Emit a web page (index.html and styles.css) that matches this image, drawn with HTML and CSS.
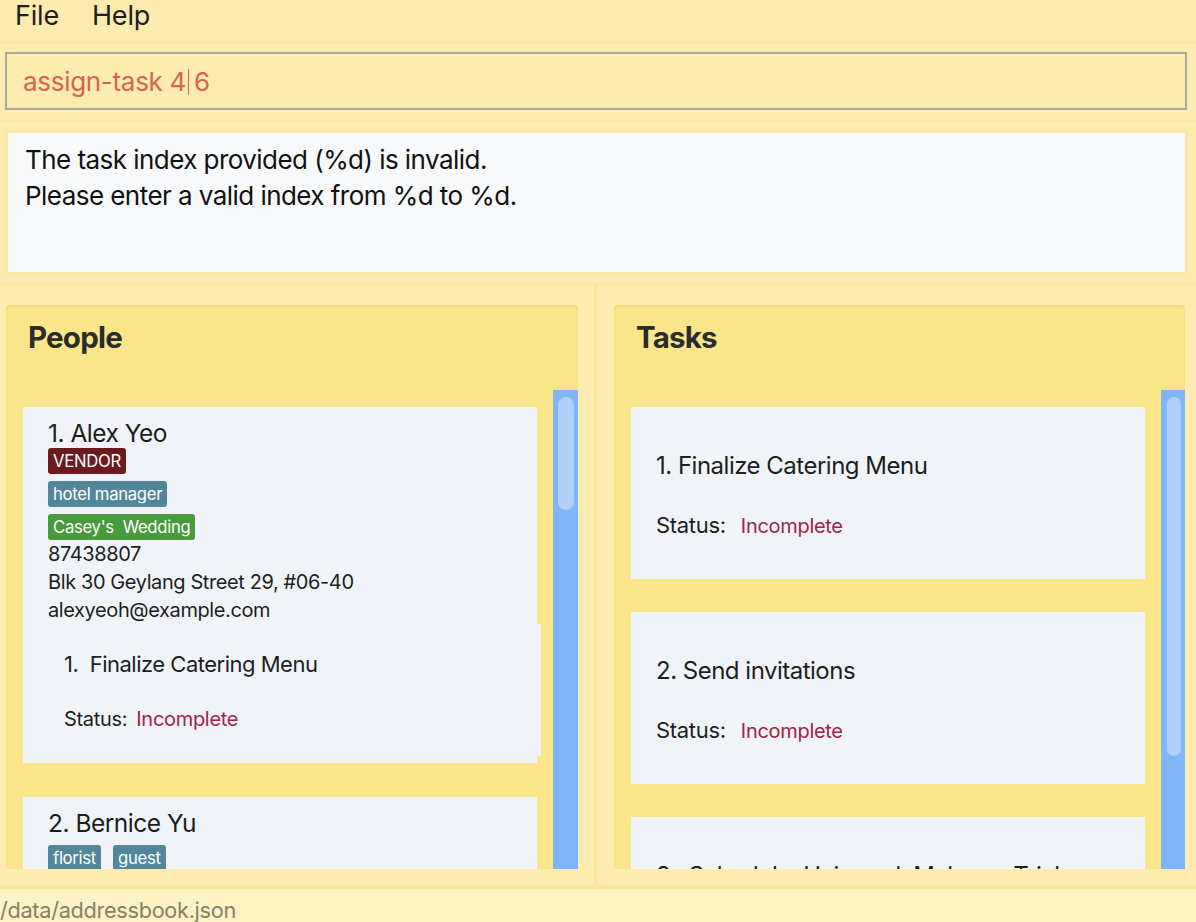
FILE: index.html
```html
<!DOCTYPE html>
<html lang="en">
<head>
<meta charset="utf-8">
<title>Address Book</title>
<link rel="stylesheet" href="styles.css">
</head>
<body>
<div class="app">
  <nav class="menubar">
    <span class="menu-item">File</span>
    <span class="menu-item">Help</span>
  </nav>

  <div class="command-area">
    <div class="command-box">
      <span class="command-text">assign-task 4<span class="caret"></span> 6</span>
    </div>
  </div>

  <div class="result-area">
    <div class="result-box">
      <p class="result-line">The task index provided (%d) is invalid.</p>
      <p class="result-line">Please enter a valid index from %d to %d.</p>
    </div>
  </div>

  <div class="panes">
    <div class="pane pane-left">
      <section class="panel">
        <header class="panel-header"><h2 class="panel-title">People</h2></header>
        <div class="panel-body">
          <div class="list">
            <article class="card person-card">
              <div class="person-name">1. Alex Yeo</div>
              <div class="tag-row"><span class="tag tag-vendor">VENDOR</span></div>
              <div class="tag-row"><span class="tag tag-blue">hotel manager</span></div>
              <div class="tag-row tag-row-last"><span class="tag tag-green">Casey's&nbsp; Wedding</span></div>
              <div class="person-line">87438807</div>
              <div class="person-line">Blk 30 Geylang Street 29, #06-40</div>
              <div class="person-line">alexyeoh@example.com</div>
              <div class="inner-task">
                <div class="inner-task-title">1.&nbsp; Finalize Catering Menu</div>
                <div class="status-line"><span class="status-label">Status:</span><span class="status-value">Incomplete</span></div>
              </div>
            </article>
            <article class="card person-card">
              <div class="person-name">2. Bernice Yu</div>
              <div class="tag-row"></div>
              <div class="tag-row tag-row-last"><span class="tag tag-blue">florist</span><span class="tag tag-blue">guest</span></div>
            </article>
          </div>
          <div class="scrollbar"><div class="thumb thumb-left"></div></div>
        </div>
      </section>
    </div>

    <div class="divider"></div>

    <div class="pane pane-right">
      <section class="panel">
        <header class="panel-header"><h2 class="panel-title">Tasks</h2></header>
        <div class="panel-body">
          <div class="list task-list">
            <article class="card task-card">
              <div class="task-title">1. Finalize Catering Menu</div>
              <div class="status-line"><span class="status-label">Status:</span><span class="status-value">Incomplete</span></div>
            </article>
            <article class="card task-card">
              <div class="task-title">2. Send invitations</div>
              <div class="status-line"><span class="status-label">Status:</span><span class="status-value">Incomplete</span></div>
            </article>
            <article class="card task-card">
              <div class="task-title">3.&nbsp; Schedule&nbsp; Hair&nbsp; and&nbsp; Makeup&nbsp; Trial</div>
            </article>
          </div>
          <div class="scrollbar"><div class="thumb thumb-right"></div></div>
        </div>
      </section>
    </div>
  </div>

  <footer class="statusbar">/data/addressbook.json</footer>
</div>
</body>
</html>
```

FILE: styles.css
```css
* { box-sizing: border-box; }

html, body {
  margin: 0;
  padding: 0;
  width: 1196px;
  height: 922px;
  overflow: hidden;
  background: #fdebb0;
  font-family: "Inter", "Liberation Sans", sans-serif;
  color: #1e1e1e;
}

.app {
  display: flex;
  flex-direction: column;
  height: 922px;
}

/* menu bar */
.menubar {
  height: 43px;
  display: flex;
  align-items: flex-start;
  gap: 33px;
  padding: 0 15px;
  border-bottom: 2px solid #fce8a2;
}
.menu-item {
  font-size: 27px;
  line-height: 32px;
  letter-spacing: -0.2px;
}

/* command box */
.command-area {
  padding: 9px 9px 10px 5px;
  border-bottom: 2px solid #fce8a2;
}
.command-box {
  height: 58px;
  border: 2px solid #a9a8a0;
  padding: 2px 16px 0;
  display: flex;
  align-items: center;
}
.command-text {
  font-size: 26px;
  line-height: 32px;
  color: #d6654b;
  letter-spacing: -0.3px;
}
.caret {
  display: inline-block;
  width: 0;
  height: 26px;
  border-left: 1.5px solid #d6654b;
  margin-left: 2px;
  margin-right: -2px;
  vertical-align: -4px;
}

/* result box */
.result-area {
  padding: 11px 11px 11px 8px;
  border-bottom: 2px solid #fce8a2;
}
.result-box {
  height: 139px;
  background: #f8f9fb;
  padding: 9px 17px;
  box-shadow: 0 0 0 3px #fce9a3;
}
.result-line {
  margin: 0;
  font-size: 26px;
  line-height: 36px;
  letter-spacing: -0.55px;
  color: #111;
}

/* panes */
.panes {
  height: 600px;
  display: flex;
}
.pane {
  display: flex;
  flex-direction: column;
}
.pane-left {
  width: 594px;
  padding: 20px 16px 16px 6px;
}
.divider {
  width: 3px;
  background: #fbe69c;
}
.pane-right {
  flex: 1;
  padding: 20px 11px 16px 17px;
}
.panel {
  flex: 1;
  display: flex;
  flex-direction: column;
  background: #fbe58b;
  border-radius: 4px 4px 0 0;
  box-shadow: inset 0 2px 2px rgba(190, 160, 40, 0.18);
  overflow: hidden;
}
.panel-header {
  height: 83px;
  padding: 14px 22px 0;
}
.panel-title {
  margin: 0;
  font-size: 29.5px;
  line-height: 36px;
  font-weight: 700;
  letter-spacing: -0.8px;
  color: #2b2b2b;
}

.panel-body {
  flex: 1;
  min-height: 0;
  display: flex;
}
.list {
  flex: 1;
  min-width: 0;
  padding: 19px 16px 0 17px;
  display: flex;
  flex-direction: column;
  gap: 34px;
  overflow: hidden;
}
.task-list { gap: 33px; }
.scrollbar {
  width: 25px;
  margin-top: 2px;
  background: #80b6f8;
  padding: 7px 4px 0 5px;
}
.pane-right .scrollbar { width: 24px; padding: 7px 4px 0 6px; }
.thumb {
  background: #aed0fb;
  border-radius: 8px;
}
.thumb-left { height: 113px; }
.thumb-right { height: 359px; }

/* cards */
.card {
  flex: none;
  background: #f0f4f9;
}
.person-card {
  padding: 11px 25px 7px;
}
.person-name {
  font-size: 24.5px;
  line-height: 30px;
  letter-spacing: -0.5px;
  color: #1c1c1c;
}
.tag-row {
  display: flex;
  gap: 12px;
  margin-bottom: 7px;
}
.tag-row-last { margin-bottom: 0; }
.tag {
  display: inline-block;
  height: 26px;
  line-height: 26px;
  padding: 0 5px;
  font-size: 16.7px;
  color: #ffffff;
  border-radius: 3px;
  letter-spacing: -0.3px;
}
.tag-vendor { background: #6b1a1d; }
.tag-blue { background: #52879b; }
.tag-green { background: #479b3b; }

.person-line {
  font-size: 20px;
  line-height: 28px;
  letter-spacing: -0.4px;
  color: #1e1e1e;
}

.inner-task {
  margin: 0 -29px 0 -25px;
  padding: 26px 16px 24px 41px;
  background: #f0f4f9;
}
.inner-task-title {
  font-size: 22px;
  line-height: 28px;
  letter-spacing: -0.5px;
  color: #1e1e1e;
  margin-bottom: 28px;
}
.status-line {
  font-size: 20px;
  line-height: 26px;
  height: 26px;
  letter-spacing: -0.3px;
}
.status-label { color: #1e1e1e; margin-right: 9px; }
.status-value { color: #a0234a; }

.task-card {
  height: 172px;
  padding: 44px 25px 0;
}
.task-title {
  font-size: 24px;
  line-height: 30px;
  letter-spacing: -0.5px;
  color: #1e1e1e;
  margin-bottom: 31px;
  white-space: nowrap;
}
.task-card .status-label {
  font-size: 22px;
  margin-right: 15px;
}

/* status bar */
.statusbar {
  flex: 1;
  border-top: 4px solid #fbe79c;
  background: #fdf2c3;
  font-size: 21.7px;
  line-height: 26px;
  padding-top: 8px;
  letter-spacing: -0.3px;
  color: #85806c;
  white-space: nowrap;
  overflow: hidden;
}
```
